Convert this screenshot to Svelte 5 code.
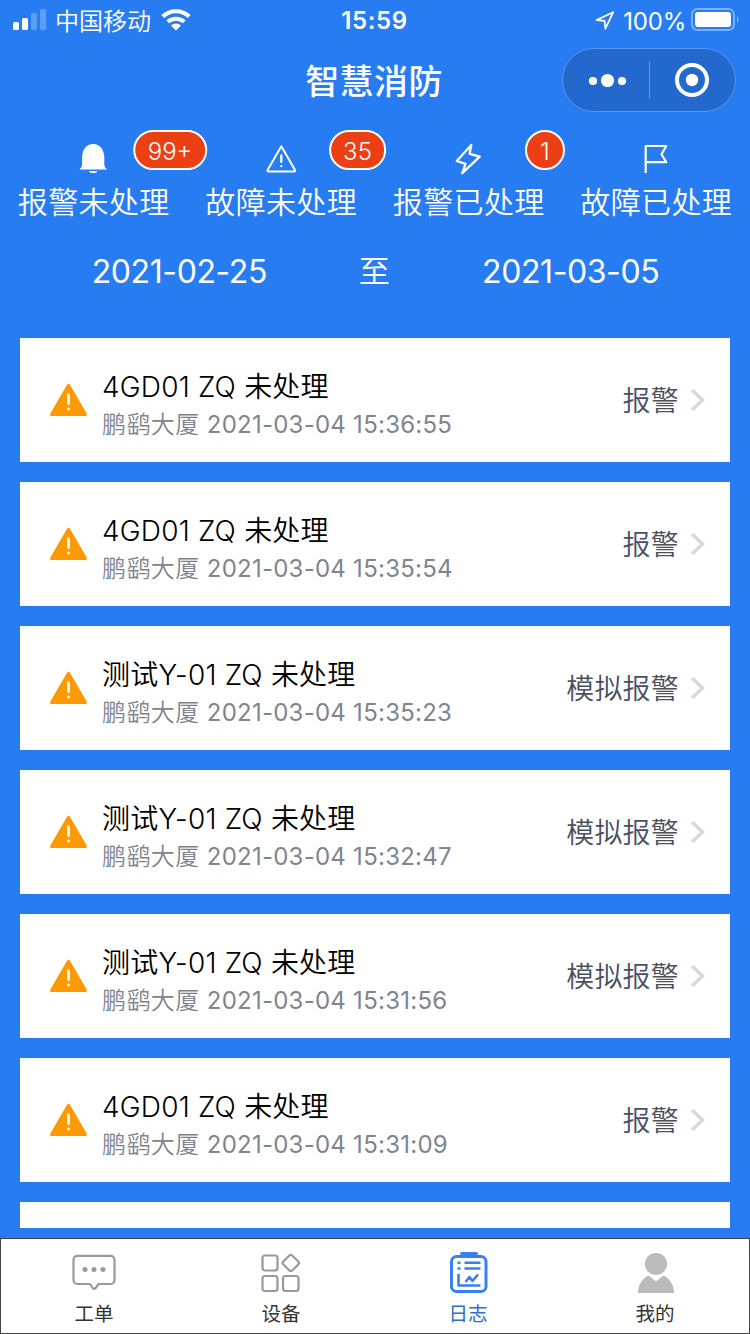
<script>
  const tabs = [
    { label: "报警未处理", icon: "bell", badge: "99+" },
    { label: "故障未处理", icon: "warning", badge: "35" },
    { label: "报警已处理", icon: "flash", badge: "1" },
    { label: "故障已处理", icon: "flag" },
  ];

  const startDate = "2021-02-25";
  const endDate = "2021-03-05";

  const logs = [
    { device: "4GD01 ZQ", time: "2021-03-04 15:36:55", type: "报警" },
    { device: "4GD01 ZQ", time: "2021-03-04 15:35:54", type: "报警" },
    { device: "测试Y-01 ZQ", time: "2021-03-04 15:35:23", type: "模拟报警" },
    { device: "测试Y-01 ZQ", time: "2021-03-04 15:32:47", type: "模拟报警" },
    { device: "测试Y-01 ZQ", time: "2021-03-04 15:31:56", type: "模拟报警" },
    { device: "4GD01 ZQ", time: "2021-03-04 15:31:09", type: "报警" },
  ];

  const menus = [
    { label: "工单", icon: "order" },
    { label: "设备", icon: "device" },
    { label: "日志", icon: "log" },
    { label: "我的", icon: "user" },
  ];

  let activeMenu = "log";
</script>

<div class="page">
  <div class="status-bar">
    <div class="status-left">
      <svg class="signal" width="34" height="22" viewBox="0 0 34 22" fill="#fff">
        <rect x="0" y="13" width="6" height="8" rx="1.6" />
        <rect x="9" y="9" width="6" height="12" rx="1.6" />
        <rect x="18" y="4" width="6" height="17" rx="1.6" opacity="0.25" />
        <rect x="27" y="0" width="6" height="21" rx="1.6" opacity="0.25" />
      </svg>
      <span class="carrier">中国移动</span>
      <svg class="wifi" width="30" height="22" viewBox="0 0 30 22" fill="none" stroke="#fff">
        <path d="M1.8 7.6a19 19 0 0 1 26.4 0" stroke-width="4.2" />
        <path d="M6.8 12.9a12 12 0 0 1 16.4 0" stroke-width="4" />
        <path d="M15 21.6l-5-5.1a7.4 7.4 0 0 1 10 0z" fill="#fff" stroke="none" />
      </svg>
    </div>
    <div class="clock">15:59</div>
    <div class="status-right">
      <svg width="20" height="20" viewBox="0 0 20 20" fill="none" stroke="#fff" stroke-width="1.8" stroke-linejoin="round">
        <path d="M18.2 2.2L1.6 10l8 .8.8 7.8z" />
      </svg>
      <span class="percent">100%</span>
      <svg width="50" height="24" viewBox="0 0 50 24">
        <rect x="1" y="1" width="42" height="21" rx="5.5" fill="none" stroke="#fff" stroke-opacity="0.4" stroke-width="2" />
        <rect x="4" y="4" width="36" height="15" rx="3" fill="#fff" />
        <path d="M46 8.2c2 1 2 5.8 0 6.8z" fill="#fff" opacity="0.45" />
      </svg>
    </div>
  </div>

  <div class="nav-bar">
    <div class="nav-title">智慧消防</div>
    <div class="capsule">
      <svg width="172" height="62" viewBox="0 0 172 62" fill="#fff">
        <circle cx="30" cy="32" r="4.1" />
        <circle cx="44.5" cy="31.5" r="6.6" />
        <circle cx="59" cy="32" r="4.1" />
        <rect x="86" y="12" width="1" height="38" opacity="0.3" />
        <circle cx="129" cy="31" r="15" fill="none" stroke="#fff" stroke-width="4" />
        <circle cx="129" cy="31" r="6.2" />
      </svg>
    </div>
  </div>

  <div class="tabs">
    {#each tabs as tab}
      <div class="tab">
        <svg width="32" height="32" viewBox="0 0 32 32" fill="none" stroke="#fff" stroke-width="2" stroke-linejoin="round" stroke-linecap="round">
          {#if tab.icon === "bell"}
            <path d="M1.4 26.6c2.4-1.9 2.7-3.5 2.7-6.5v-5.6C4.1 6.8 8.5 1 15.2 1s11.1 5.8 11.1 13.5v5.6c0 3 .3 4.6 2.7 6.5z" fill="#fff" stroke="none" />
            <path d="M11 27.9h8.4c-.9 2.9-7.5 2.9-8.4 0z" fill="#fff" stroke="none" />
          {:else if tab.icon === "warning"}
            <path d="M16.3 3.3L30 27a.9.9 0 0 1-.8 1.4H3.4a.9.9 0 0 1-.8-1.4z" />
            <path d="M16.3 12.5v6.5M16.3 23.1v.1" stroke-width="2.3" />
          {:else if tab.icon === "flash"}
            <path d="M18.3 2L3.8 18l8.7 2.8-3.3 9.4L26.8 13.6l-10.2-2.7z" stroke-width="2.3" />
          {:else}
            <path d="M5.7 30V3h20.6l-4.8 8.2 4.8 8H6.2" stroke-width="2.2" stroke-linecap="butt" />
          {/if}
        </svg>
        <div class="tab-label">{tab.label}</div>
        {#if tab.badge}
          <div class="badge">{tab.badge}</div>
        {/if}
      </div>
    {/each}
  </div>

  <div class="date-range">
    <div class="date">{startDate}</div>
    <div class="date-to">至</div>
    <div class="date">{endDate}</div>
  </div>

  <div class="log-list">
    {#each logs as log}
      <div class="log-item">
        <svg class="log-icon" width="38" height="34" viewBox="0 0 38 34">
          <path d="M18.5 2.2L35.5 31.5H1.5z" fill="#ff9900" stroke="#ff9900" stroke-width="3" stroke-linejoin="round" />
          <path d="M18.5 12v8.5" stroke="#fff" stroke-width="2.8" stroke-linecap="round" />
          <circle cx="18.5" cy="26" r="1.6" fill="#fff" />
        </svg>
        <div class="log-content">
          <div class="log-title">{log.device} 未处理</div>
          <div class="log-brief">鹏鹞大厦 <span class="log-time">{log.time}</span></div>
        </div>
        <div class="log-type">{log.type}</div>
        <svg class="arrow" width="15" height="24" viewBox="0 0 15 24" fill="none" stroke="#d8d8dc" stroke-width="3.6">
          <path d="M2.2 2L12.5 12 2.2 22" />
        </svg>
      </div>
    {/each}
    <div class="log-item cut"></div>
  </div>

  <div class="menu-bar">
    {#each menus as menu}
      <div class="menu" class:active={menu.icon === activeMenu}>
        <svg width="48" height="48" viewBox="0 0 48 48" fill="none" stroke="#999" stroke-width="2.2" stroke-linejoin="round">
          {#if menu.icon === "order"}
            <path d="M7.5 6.8h33a4 4 0 0 1 4 4V31a4 4 0 0 1-4 4H28.500l-2.800 4q-1.500 1.700-3 0L20 35H7.500a4 4 0 0 1-4-4V10.800a4 4 0 0 1 4-4z" />
            <g fill="#999" stroke="none">
              <circle cx="15" cy="20.5" r="2.5" />
              <circle cx="24" cy="20.5" r="2.5" />
              <circle cx="33" cy="20.5" r="2.5" />
            </g>
          {:else if menu.icon === "device"}
            <rect x="5.5" y="6.5" width="15" height="15" rx="2.5" />
            <rect x="5.5" y="27" width="15" height="15" rx="2.5" />
            <rect x="26" y="27" width="15.5" height="15" rx="2.5" />
            <rect x="27.5" y="7.7" width="12.6" height="12.6" rx="2" transform="rotate(45 33.8 14)" />
          {:else if menu.icon === "log"}
            <g stroke="#3a7ff0" stroke-width="3">
              <rect x="7.5" y="7.5" width="34.5" height="35" rx="5" />
              <path d="M17.5 4.5h15" stroke-linecap="round" />
              <path d="M20.5 13.7h16M20.5 19.5h16M13.5 13.7h3M13.5 19.5h3" stroke-width="2.4" />
              <path d="M14.5 25v11.5h22" stroke-width="2.6" />
              <path d="M21.5 33l4-5 3 4 5.5-6.5" stroke-width="2.6" />
            </g>
          {:else}
            <g fill="#bbb" stroke="none">
              <circle cx="25" cy="15" r="11" />
              <path d="M7 44c0-8 4-14.5 10.5-17.5l7.5 6 7.5-6C39 29.5 43 36 43 44z" />
            </g>
          {/if}
        </svg>
        <div class="menu-label">{menu.label}</div>
      </div>
    {/each}
  </div>
</div>

<style>
  :global(body) {
    margin: 0;
    background: #287cf2;
  }

  .page {
    display: flex;
    flex-direction: column;
    width: 750px;
    height: 1334px;
    overflow: hidden;
    background: #287cf2;
    color: #fff;
    font-family: Inter, "Noto Sans CJK SC", sans-serif;
    font-weight: 350;
    white-space: nowrap;
  }

  .status-bar {
    display: grid;
    grid-template-columns: 1fr auto 1fr;
    align-items: center;
    height: 40px;
    padding: 0 9px 0 13px;
    flex: none;
  }

  .status-left,
  .status-right {
    display: flex;
    align-items: center;
  }

  .status-right {
    justify-content: flex-end;
  }

  .carrier {
    margin: 0 10px 0 8px;
    padding-top: 3px;
    font-size: 24px;
    line-height: 37px;
  }

  .clock {
    margin-right: 5px;
    padding-top: 1px;
    font-size: 24px;
    font-weight: 600;
    letter-spacing: 0.6px;
  }

  .percent {
    margin: 0 5px 0 8px;
    padding-top: 2px;
    font-size: 24px;
    font-weight: 400;
    letter-spacing: -0.2px;
  }

  .nav-bar {
    display: grid;
    grid-template-columns: 1fr auto 1fr;
    align-items: center;
    height: 80px;
    padding: 0 14px;
    flex: none;
  }

  .nav-title {
    grid-column: 2;
    padding: 0 2px 2px 0;
    font-size: 34px;
    font-weight: 500;
    letter-spacing: 0.4px;
  }

  .capsule {
    justify-self: end;
    width: 172px;
    height: 62px;
    border: 1px solid #5795ec;
    border-radius: 32px;
    background: #2369cd;
  }

  .capsule svg {
    display: block;
  }

  .tabs {
    display: flex;
    height: 120px;
    flex: none;
  }

  .tab {
    position: relative;
    display: flex;
    flex: 1;
    flex-direction: column;
    align-items: center;
    padding-top: 23px;
  }

  .tab-label {
    margin-top: 2px;
    font-size: 30px;
    line-height: 50px;
    letter-spacing: 0.4px;
  }

  .badge {
    position: absolute;
    top: 10px;
    left: 170px;
    height: 40px;
    min-width: 40px;
    padding: 0 12.5px;
    box-sizing: border-box;
    border: 2px solid #fff;
    border-radius: 20px;
    background: #ed3f14;
    font-size: 24px;
    line-height: 40px;
    text-align: center;
    transform: translateX(-50%);
  }

  .date-range {
    display: flex;
    align-items: center;
    height: 62px;
    padding-bottom: 36px;
    flex: none;
    font-size: 32px;
    font-weight: 400;
    letter-spacing: -0.4px;
  }

  .date {
    flex: 1;
    text-align: center;
  }

  .date-to {
    padding-right: 2px;
    font-size: 31px;
    font-weight: 350;
    line-height: 40px;
    margin-top: -1px;
  }

  .log-list {
    display: flex;
    flex-direction: column;
    gap: 20px;
    flex: 1;
    min-height: 0;
    padding: 0 20px;
  }

  .log-item {
    display: flex;
    align-items: center;
    height: 124px;
    padding: 0 25px 0 30px;
    box-sizing: border-box;
    flex: none;
    background: #fff;
  }

  .log-item.cut {
    height: 26px;
  }

  .log-content {
    flex: 1;
    margin-left: 14px;
    padding-top: 11px;
  }

  .log-title {
    color: #000;
    font-size: 28px;
    line-height: 39px;
    letter-spacing: 0.2px;
  }

  .log-brief {
    color: #80848f;
    font-size: 24px;
    line-height: 36px;
    letter-spacing: 0.4px;
  }

  .log-time {
    font-weight: 400;
    letter-spacing: 0.25px;
  }

  .log-type {
    margin-right: 11px;
    padding-bottom: 2px;
    color: #495060;
    font-size: 28px;
    letter-spacing: 0.2px;
  }

  .menu-bar {
    display: flex;
    height: 96px;
    box-sizing: border-box;
    border: 1px solid #444;
    flex: none;
    background: #fff;
  }

  .menu {
    display: flex;
    flex: 1;
    flex-direction: column;
    align-items: center;
    padding: 10px 1px 0 0;
    color: #333;
    font-size: 19.5px;
    font-weight: 400;
  }

  .menu-label {
    line-height: 34px;
  }

  .menu.active {
    color: #2d6fd0;
  }
</style>
